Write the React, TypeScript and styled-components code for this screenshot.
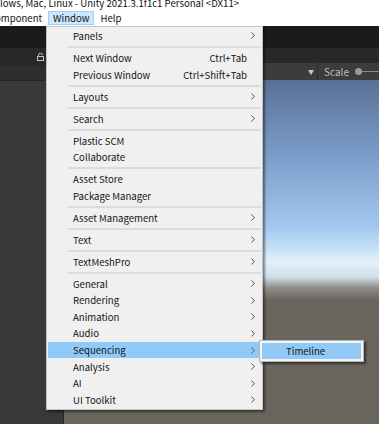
import React from "react";
import styled, { createGlobalStyle } from "styled-components";

const GlobalStyle = createGlobalStyle`
  html, body {
    margin: 0;
    padding: 0;
  }
  body {
    width: 379px;
    height: 424px;
    overflow: hidden;
    background: #383838;
    font-family: "Noto Sans CJK SC", "Liberation Sans", sans-serif;
  }
`;

const Screen = styled.div`
  position: relative;
  width: 379px;
  height: 424px;
  display: flex;
  flex-direction: column;
  overflow: hidden;
`;

const TitleBar = styled.div`
  height: 10px;
  background: #ffffff;
  overflow: hidden;
`;

const TitleText = styled.div`
  margin-top: -3px;
  font-size: 9.6px;
  line-height: 12px;
  color: #111;
  white-space: nowrap;
`;

const MenuBar = styled.div`
  height: 16px;
  background: #ffffff;
  display: flex;
  align-items: center;
`;

const BarItem = styled.div<{ $active?: boolean; $first?: boolean }>`
  height: 14px;
  box-sizing: border-box;
  padding: 0 ${(p) => (p.$active ? "4px" : "5px")};
  margin-left: ${(p) => (p.$first ? "-11px" : "0")};
  font-size: 9.6px;
  line-height: 12px;
  color: #111;
  background: ${(p) => (p.$active ? "#cce8ff" : "transparent")};
  border: 1px solid ${(p) => (p.$active ? "#99d1ff" : "transparent")};
`;

const Editor = styled.div`
  flex: 1;
  display: flex;
  flex-direction: column;
`;

const MainToolbar = styled.div`
  height: 22px;
  background: #1b1b1b;
`;

const Panes = styled.div`
  flex: 1;
  display: flex;
`;

const Hierarchy = styled.div`
  width: 63px;
  display: flex;
  flex-direction: column;
  border-right: 1px solid #232323;
`;

const TabHeader = styled.div<{ $h: number }>`
  height: ${(p) => p.$h}px;
  background: #282828;
  display: flex;
  align-items: center;
  justify-content: flex-end;
  padding-right: 19px;
`;

const SearchRow = styled.div`
  height: 14px;
  background: #2e2e2e;
  border-bottom: 1px solid #232323;
`;

const PanelBody = styled.div`
  flex: 1;
  background: #383838;
  display: flex;
  justify-content: flex-end;
  padding-top: 13px;
  align-items: flex-start;
`;

const Scene = styled.div`
  flex: 1;
  display: flex;
  flex-direction: column;
`;

const SceneTab = styled.div`
  height: 15px;
  background: #282828;
`;

const SceneToolbar = styled.div`
  height: 17px;
  background: #3c3c3c;
  display: flex;
  align-items: center;
  justify-content: flex-end;
  font-size: 10px;
  color: #bdbdbd;
`;

const DropArrow = styled.span`
  font-size: 6px;
  color: #c8c8c8;
  margin-right: 3px;
`;

const Divider = styled.div`
  width: 1px;
  height: 17px;
  background: #2a2a2a;
  margin-right: 6px;
`;

const Slider = styled.div`
  display: flex;
  align-items: center;
  width: 24px;
  margin-left: 6px;
`;

const Knob = styled.div`
  width: 7px;
  height: 7px;
  border-radius: 50%;
  background: #9a9a9a;
  flex: none;
`;

const Track = styled.div`
  flex: 1;
  height: 1px;
  background: #8a8a8a;
`;

const Viewport = styled.div`
  flex: 1;
  background: linear-gradient(
    to bottom,
    #5a7196 0px,
    #7d9fcc 80px,
    #a3c8ef 147px,
    #c8e2f7 170px,
    #e2f1fb 182px,
    #cfdfe8 197px,
    #8f8c88 208px,
    #6b655f 220px,
    #6a645e 100%
  );
`;

const Menu = styled.div`
  position: absolute;
  left: 46px;
  top: 26px;
  width: 217px;
  box-sizing: border-box;
  padding: 0.7px 0 1px 1px;
  background: #f0f0f0;
  border: 1px solid #c4c4c4;
  box-shadow: 2px 2px 2px rgba(0, 0, 0, 0.45);
`;

const Item = styled.div<{ $hover?: boolean }>`
  height: 16.6px;
  display: grid;
  grid-template-columns: 1fr auto 15px;
  align-items: center;
  padding-left: 25px;
  font-size: 9.6px;
  color: #141414;
  background: ${(p) => (p.$hover ? "#91c9f7" : "transparent")};
`;

const Shortcut = styled.span`
  text-align: right;
`;

const ArrowCell = styled.span`
  display: flex;
  align-items: center;
  padding-left: 4px;
`;

const Separator = styled.div`
  height: 5.4px;
  display: flex;
  align-items: center;
  padding: 0 1px 0 20px;
  &::after {
    content: "";
    flex: 1;
    height: 2px;
    background: #dcdcdc;
  }
`;

const SubMenu = styled.div`
  position: absolute;
  left: 259px;
  top: 340px;
  width: 105px;
  box-sizing: border-box;
  padding: 2px;
  background: #f4f4f4;
  border: 1px solid #b8b8b8;
  box-shadow: 2px 2px 2px rgba(0, 0, 0, 0.5);
`;

const SubItem = styled.div`
  height: 16px;
  display: flex;
  align-items: center;
  padding-left: 24px;
  background: #91c9f7;
  font-size: 9.6px;
  color: #141414;
`;

const Chevron = () => (
  <svg width="4" height="7" viewBox="0 0 4 7">
    <path d="M0.5 0.5 L3.3 3.5 L0.5 6.5" fill="none" stroke="#555" strokeWidth="1" />
  </svg>
);

const Lock = () => (
  <svg width="7" height="8" viewBox="0 0 7 8">
    <path d="M1.5 3.5 V2.2 A2 2 0 0 1 5.5 2.2" fill="none" stroke="#c4c4c4" strokeWidth="1" />
    <rect x="0.5" y="3.5" width="6" height="4" fill="none" stroke="#c4c4c4" strokeWidth="1" />
  </svg>
);

const RedMark = () => (
  <svg width="7" height="7" viewBox="0 0 7 7">
    <rect x="0" y="1" width="7" height="6" fill="#b52020" />
    <rect x="2" y="0" width="3" height="2" fill="#888" />
  </svg>
);

type Entry =
  | { label: string; shortcut?: string; sub?: boolean; hover?: boolean }
  | "sep";

const entries: Entry[] = [
  { label: "Panels", sub: true },
  "sep",
  { label: "Next Window", shortcut: "Ctrl+Tab" },
  { label: "Previous Window", shortcut: "Ctrl+Shift+Tab" },
  "sep",
  { label: "Layouts", sub: true },
  "sep",
  { label: "Search", sub: true },
  "sep",
  { label: "Plastic SCM" },
  { label: "Collaborate" },
  "sep",
  { label: "Asset Store" },
  { label: "Package Manager" },
  "sep",
  { label: "Asset Management", sub: true },
  "sep",
  { label: "Text", sub: true },
  "sep",
  { label: "TextMeshPro", sub: true },
  "sep",
  { label: "General", sub: true },
  { label: "Rendering", sub: true },
  { label: "Animation", sub: true },
  { label: "Audio", sub: true },
  { label: "Sequencing", sub: true, hover: true },
  { label: "Analysis", sub: true },
  { label: "AI", sub: true },
  { label: "UI Toolkit", sub: true },
];

export default function App() {
  return (
    <>
      <GlobalStyle />
      <Screen>
        <TitleBar>
          <TitleText>lows, Mac, Linux - Unity 2021.3.1f1c1 Personal &lt;DX11&gt;</TitleText>
        </TitleBar>
        <MenuBar>
          <BarItem $first>omponent</BarItem>
          <BarItem $active>Window</BarItem>
          <BarItem>Help</BarItem>
        </MenuBar>
        <Editor>
          <MainToolbar />
          <Panes>
            <Hierarchy>
              <TabHeader $h={18}>
                <Lock />
              </TabHeader>
              <SearchRow />
              <PanelBody>
                <RedMark />
              </PanelBody>
            </Hierarchy>
            <Scene>
              <SceneTab />
              <SceneToolbar>
                <DropArrow>▼</DropArrow>
                <Divider />
                <span>Scale</span>
                <Slider>
                  <Knob />
                  <Track />
                </Slider>
              </SceneToolbar>
              <Viewport />
            </Scene>
          </Panes>
        </Editor>

        <Menu>
          {entries.map((e, i) =>
            e === "sep" ? (
              <Separator key={i} />
            ) : (
              <Item key={i} $hover={e.hover}>
                <span>{e.label}</span>
                <Shortcut>{e.shortcut ?? ""}</Shortcut>
                <ArrowCell>{e.sub ? <Chevron /> : null}</ArrowCell>
              </Item>
            )
          )}
        </Menu>
        <SubMenu>
          <SubItem>Timeline</SubItem>
        </SubMenu>
      </Screen>
    </>
  );
}
